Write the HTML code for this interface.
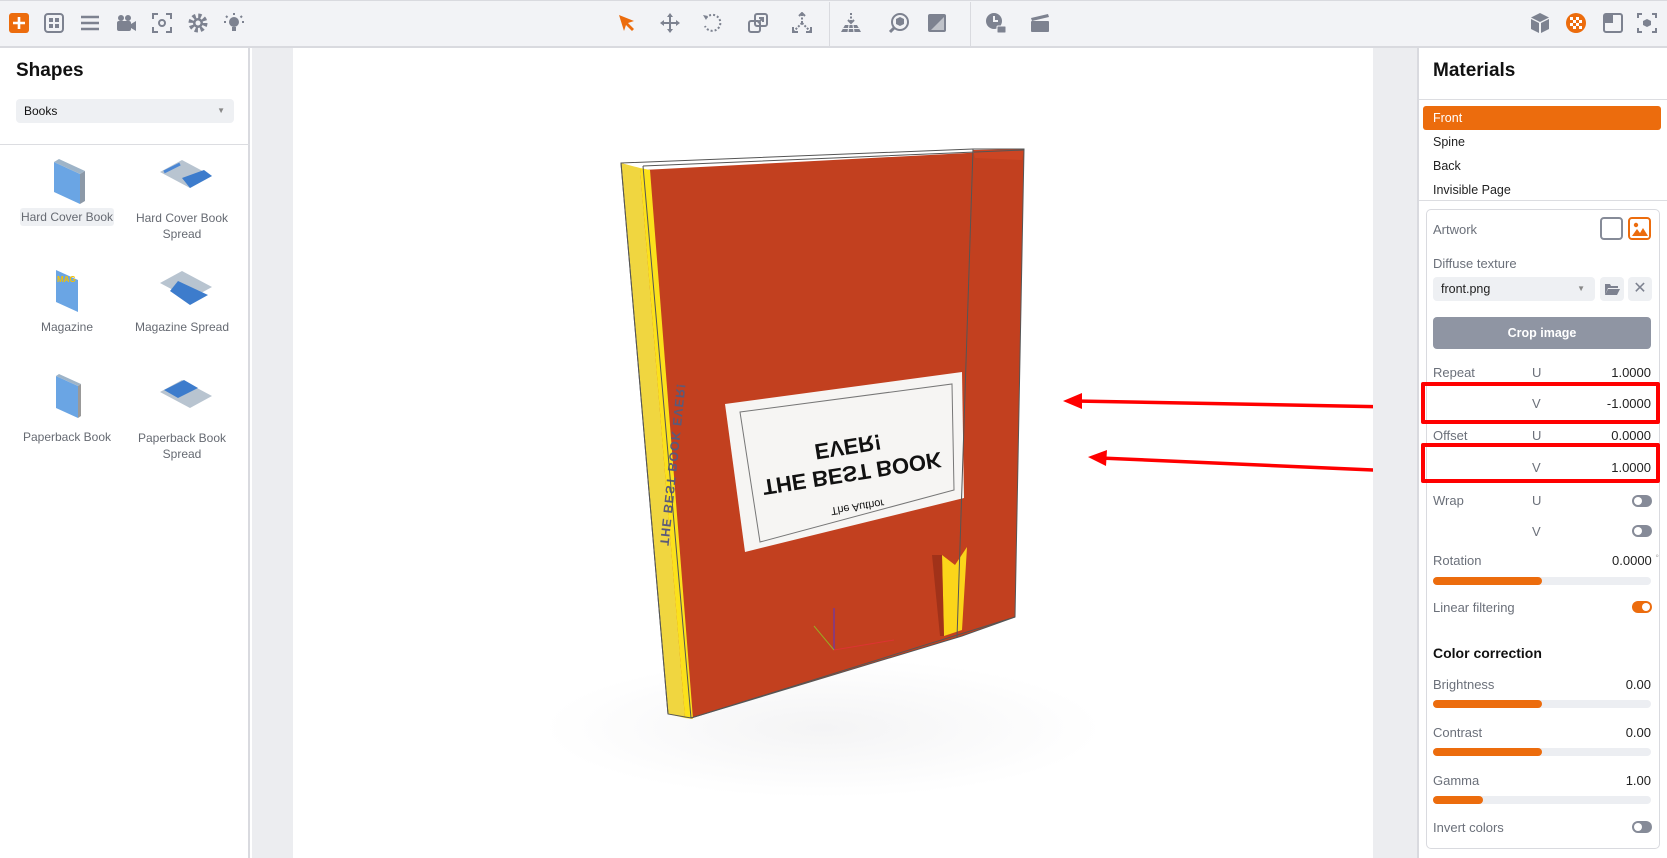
<!DOCTYPE html>
<html><head><meta charset="utf-8"><style>
*{box-sizing:border-box;margin:0;padding:0}
body{width:1667px;height:858px;overflow:hidden;font-family:"Liberation Sans",sans-serif;background:#fff;position:relative;color:#222}
.a{position:absolute}
.tb{left:0;top:0;width:1667px;height:48px;background:#f2f3f6;border-bottom:2px solid #d9dadf;border-top:1px solid #d9dadf}
.ic{position:absolute;top:12px;width:22px;height:22px}
.lbl{font-size:13px;color:#6b707a;position:absolute}
.val{font-size:13px;color:#222;position:absolute;text-align:right;right:16px}
.sl{position:absolute;left:1433px;width:218px;height:8px;border-radius:4px;background:#eceef2}
.sl i{display:block;height:8px;border-radius:4px;background:#ec6c0d}
.tg{position:absolute;left:1632px;width:20px;height:12px;border-radius:6px;background:#868b98}
.tg i{position:absolute;left:2px;top:2px;width:8px;height:8px;border-radius:50%;background:#fff}
.shl{font-size:12px;color:#666a72;position:absolute;text-align:center;width:120px}
</style></head><body>
<div class="a tb"></div>
<svg class="ic" style="left:8px" viewBox="0 0 22 22"><rect x="1" y="1" width="20" height="20" rx="3" fill="#ec6c0d"/><path d="M11 5v12M5 11h12" stroke="#fff" stroke-width="2.6"/></svg>
<svg class="ic" style="left:43px" viewBox="0 0 22 22"><rect x="2" y="2" width="18" height="18" rx="3" fill="none" stroke="#7d8290" stroke-width="2"/><rect x="6" y="6" width="4" height="4" fill="#7d8290"/><rect x="12" y="6" width="4" height="4" fill="#7d8290"/><rect x="6" y="12" width="4" height="4" fill="#7d8290"/><rect x="12" y="12" width="4" height="4" fill="#7d8290"/></svg>
<svg class="ic" style="left:79px" viewBox="0 0 22 22"><path d="M2 5h18M2 11h18M2 17h18" stroke="#7d8290" stroke-width="2.6"/></svg>
<svg class="ic" style="left:115px" viewBox="0 0 22 22"><circle cx="6" cy="6" r="3" fill="#7d8290"/><circle cx="13" cy="6" r="3" fill="#7d8290"/><rect x="2" y="9" width="14" height="10" rx="2" fill="#7d8290"/><path d="M16 12l5-3v10l-5-3z" fill="#7d8290"/></svg>
<svg class="ic" style="left:151px" viewBox="0 0 22 22"><path d="M2 7V2h5M15 2h5v5M20 15v5h-5M7 20H2v-5" stroke="#7d8290" stroke-width="2" fill="none"/><circle cx="11" cy="11" r="3" fill="none" stroke="#7d8290" stroke-width="2"/></svg>
<svg class="ic" style="left:187px" viewBox="0 0 22 22"><circle cx="11" cy="11" r="7" fill="none" stroke="#7d8290" stroke-width="5" stroke-dasharray="3 2.5"/><circle cx="11" cy="11" r="5" fill="#7d8290"/><circle cx="11" cy="11" r="2.5" fill="#f2f3f6"/></svg>
<svg class="ic" style="left:223px" viewBox="0 0 22 22"><circle cx="11" cy="10" r="5" fill="#7d8290"/><rect x="9" y="15" width="4" height="4" fill="#7d8290"/><path d="M11 1v2M3 4l1.5 1.5M19 4l-1.5 1.5M1 10h2M19 10h2" stroke="#7d8290" stroke-width="2"/></svg>
<svg class="ic" style="left:616px" viewBox="0 0 22 22"><path d="M3 3l15 6-6 2 6 6-2 2-6-6-2 6z" fill="#ec6c0d"/></svg>
<svg class="ic" style="left:659px" viewBox="0 0 22 22"><path d="M11 1l3 4h-2v5h5V8l4 3-4 3v-2h-5v5h2l-3 4-3-4h2v-5H5v2l-4-3 4-3v2h5V5H8z" fill="#7d8290"/></svg>
<svg class="ic" style="left:701px" viewBox="0 0 22 22"><path d="M5 6A8 8 0 1 1 4 14" fill="none" stroke="#7d8290" stroke-width="2" stroke-dasharray="2 2"/><path d="M2 3l5 1-2 4z" fill="#7d8290"/></svg>
<svg class="ic" style="left:747px" viewBox="0 0 22 22"><rect x="2" y="9" width="11" height="11" rx="2" fill="none" stroke="#7d8290" stroke-width="2"/><rect x="8" y="2" width="12" height="12" rx="2" fill="none" stroke="#7d8290" stroke-width="2"/><path d="M11 11l5-5M12 6h4v4" stroke="#7d8290" stroke-width="2" fill="none"/></svg>
<svg class="ic" style="left:791px" viewBox="0 0 22 22"><path d="M11 2v9M11 11l-8 8M11 11l8 8" stroke="#7d8290" stroke-width="2" stroke-dasharray="2 1.5"/><path d="M8 4l3-3 3 3M2 15v5h5M20 15v5h-5" stroke="#7d8290" stroke-width="2" fill="none"/></svg>
<div class="a" style="left:829px;top:2px;width:1px;height:45px;background:#d9dadf"></div>
<svg class="ic" style="left:840px" viewBox="0 0 22 22"><path d="M11 1v9" stroke="#7d8290" stroke-width="2" stroke-dasharray="2 1.5"/><path d="M8 8l3 3 3-3" stroke="#7d8290" stroke-width="2" fill="none"/><path d="M5 13h12l4 7H1z" fill="#7d8290"/><path d="M3 16.5h16M9 13l-1 7M13 13l1 7" stroke="#f2f3f6" stroke-width="1"/></svg>
<svg class="ic" style="left:888px" viewBox="0 0 22 22"><circle cx="12" cy="10" r="8" fill="none" stroke="#7d8290" stroke-width="2"/><path d="M6 16l-4 4" stroke="#7d8290" stroke-width="3"/><path d="M12 5l4 2v5l-4 2-4-2V7z" fill="#7d8290"/></svg>
<svg class="ic" style="left:926px" viewBox="0 0 22 22"><rect x="2" y="2" width="18" height="18" rx="2" fill="#7d8290"/><path d="M5 18L18 5v13z" fill="#bfc2c9"/></svg>
<div class="a" style="left:970px;top:2px;width:1px;height:45px;background:#d9dadf"></div>
<svg class="ic" style="left:985px" viewBox="0 0 22 22"><circle cx="9" cy="9" r="8" fill="#7d8290"/><path d="M9 4v5h4" stroke="#f2f3f6" stroke-width="2" fill="none"/><rect x="12" y="14" width="9" height="7" rx="1" fill="#7d8290" stroke="#f2f3f6"/></svg>
<svg class="ic" style="left:1029px" viewBox="0 0 22 22"><path d="M2 6l17-4 1 3-17 4z" fill="#7d8290"/><rect x="2" y="9" width="18" height="11" rx="1" fill="#7d8290"/></svg>
<svg class="ic" style="left:1529px" viewBox="0 0 22 22"><path d="M11 1l9 4.5-9 4.5-9-4.5z" fill="#7d8290"/><path d="M2 7l8 4v10l-8-4zM20 7l-8 4v10l8-4z" fill="#7d8290"/></svg>
<svg class="ic" style="left:1565px" viewBox="0 0 22 22"><circle cx="11" cy="11" r="10" fill="#ec6c0d"/><g fill="#fff"><rect x="5" y="5" width="3" height="3"/><rect x="11" y="5" width="3" height="3"/><rect x="8" y="8" width="3" height="3"/><rect x="14" y="8" width="3" height="3"/><rect x="5" y="11" width="3" height="3"/><rect x="11" y="11" width="3" height="3"/><rect x="8" y="14" width="3" height="3"/><rect x="14" y="14" width="3" height="3"/></g></svg>
<svg class="ic" style="left:1602px" viewBox="0 0 22 22"><rect x="2" y="2" width="18" height="18" rx="2" fill="none" stroke="#7d8290" stroke-width="2"/><path d="M3 3h8v8H3z" fill="#7d8290"/></svg>
<svg class="ic" style="left:1636px" viewBox="0 0 22 22"><path d="M2 6V2h4M16 2h4v4M20 16v4h-4M6 20H2v-4" stroke="#7d8290" stroke-width="2" fill="none"/><path d="M11 7l4 2v4l-4 2-4-2V9z" fill="#7d8290"/></svg>

<div class="a" style="left:0;top:48px;width:250px;height:810px;background:#fff;border-right:2px solid #d9dadf"></div>
<div class="a" style="left:16px;top:60px;font-size:19px;font-weight:bold;color:#111">Shapes</div>
<div class="a" style="left:16px;top:99px;width:218px;height:24px;background:#eef0f3;border-radius:4px;font-size:12px;line-height:24px;padding-left:8px;color:#111">Books<span style="position:absolute;right:9px;top:0;font-size:8px;color:#888">▼</span></div>
<div class="a" style="left:0;top:144px;width:250px;height:1px;background:#dcdde1"></div>
<svg class="a" style="left:0;top:150px" width="250" height="320" viewBox="0 150 250 320">
 <g><path d="M54 162l26 12v30l-26-12z" fill="#6aa5e4"/><path d="M54 162l5-3 26 12-5 3z" fill="#9eb4c8"/><path d="M80 174l5-3v30l-5 3z" fill="#8c99a8"/></g>
 <g><path d="M160 172l22-12 30 16-22 12z" fill="#b8c4d0"/><path d="M182 178l22-8 8 6-22 12z" fill="#3d7ccc"/><path d="M164 172l16-8" stroke="#4a86d4" stroke-width="3"/></g>
 <g><path d="M56 270l22 10v32l-22-10z" fill="#6aa5e4"/><text x="57" y="282" font-size="8" font-weight="bold" fill="#f6c200" font-family="Liberation Sans">MAG</text></g>
 <g><path d="M160 283l22-12 30 16-22 12z" fill="#b8c4d0"/><path d="M178 281l30 14-18 10-20-14z" fill="#3d7ccc"/></g>
 <g><path d="M56 376l22 10v32l-22-10z" fill="#6aa5e4"/><path d="M56 376l3-2 22 10-3 2z" fill="#9eb4c8"/><path d="M78 386l3-2v32l-3 2z" fill="#999"/></g>
 <g><path d="M160 392l22-12 30 16-22 12z" fill="#b8c4d0"/><path d="M164 390l20-10 14 8-20 10z" fill="#3d7ccc"/></g>
</svg>
<div class="a" style="left:20px;top:208px;width:94px;height:18px;background:#eef0f3;border-radius:3px"></div>
<div class="shl" style="left:7px;top:210px">Hard Cover Book</div>
<div class="shl" style="left:122px;top:210px;line-height:16px">Hard Cover Book<br>Spread</div>
<div class="shl" style="left:7px;top:320px">Magazine</div>
<div class="shl" style="left:122px;top:320px">Magazine Spread</div>
<div class="shl" style="left:7px;top:430px">Paperback Book</div>
<div class="shl" style="left:122px;top:430px;line-height:16px">Paperback Book<br>Spread</div>

<div class="a" style="left:252px;top:48px;width:41px;height:810px;background:#ecedf0"></div>
<div class="a" style="left:1373px;top:48px;width:44px;height:810px;background:#ecedf0"></div>
<div class="a" style="left:293px;top:48px;width:1080px;height:810px;background:radial-gradient(ellipse 280px 70px at 530px 680px,#f4f4f5,#fff 100%)"></div>
<svg class="a" style="left:293px;top:48px" width="1080" height="810" viewBox="293 48 1080 810">
 <polygon points="621,163 643,170 1024,150 1015,617 962,636 691,718 668,714" fill="#c2401f"/>
 <polygon points="621,163 640,168 685,718 668,714" fill="#f0d640"/>
 <polygon points="640,168 650,170 693,719 685,718" fill="#fbe11c"/>
 <polygon points="973,150 1024,149 1022,160 975,158" fill="#cc4523"/>
 <polygon points="725,404 962,372 964,498 745,552" fill="#f6f5f3"/>
 <polygon points="740,412 952,384 954,490 760,542" fill="none" stroke="#777" stroke-width="1"/>
 <g transform="translate(851,466) rotate(-9) scale(1,-1)" font-family="Liberation Sans" font-weight="bold" fill="#111" text-anchor="middle">
  <text x="0" y="0" font-size="22">THE BEST BOOK</text>
  <text x="0" y="27" font-size="22">EVER!</text>
  <text x="0" y="-38" font-size="11" font-weight="normal">The Author</text>
 </g>
 <text transform="translate(660,545) rotate(-84) scale(1,-1)" font-size="12.5" font-weight="bold" letter-spacing="1" fill="#5a5a7a" font-family="Liberation Sans">THE BEST BOOK EVER!</text>
 <polygon points="942,555 955,565 967,547 962,630 944,636" fill="#fbd51a"/>
 <polygon points="932,555 942,555 944,636 940,636" fill="#8a2a16" opacity=".6"/>
 <g fill="none" stroke="#555" stroke-width="1">
  <polygon points="621,163 973,149 1024,149 1015,617 962,636 691,718 668,714"/>
  <path d="M621,163 L668,714 M643,166 L691,718 M973,149 L957,638 M643,166 L1024,150 M691,718 L1015,617"/>
 </g>
 <path d="M834,650v-42" stroke="#5533cc"/><path d="M834,650l-20-24" stroke="#99aa22"/><path d="M834,650l60-10" stroke="#dd3333"/>
 <line x1="1396" y1="407" x2="1075" y2="401" stroke="#f00" stroke-width="3.5"/>
 <polygon points="1063,401 1082,393 1082,409" fill="#f00"/>
 <line x1="1396" y1="471" x2="1100" y2="458" stroke="#f00" stroke-width="3.5"/>
 <polygon points="1088,457 1107,450 1106,466" fill="#f00"/>
</svg>

<div class="a" style="left:1417px;top:48px;width:250px;height:810px;background:#fff;border-left:2px solid #d9dadf"></div>
<div class="a" style="left:1433px;top:60px;font-size:19px;font-weight:bold;color:#111">Materials</div>
<div class="a" style="left:1419px;top:99px;width:248px;height:1px;background:#dcdde1"></div>
<div class="a" style="left:1423px;top:106px;width:238px;height:24px;background:#ec6c0d;border-radius:3px;color:#fff;font-size:12.5px;line-height:24px;padding-left:10px">Front</div>
<div class="a" style="left:1433px;top:135px;font-size:12.5px">Spine</div>
<div class="a" style="left:1433px;top:159px;font-size:12.5px">Back</div>
<div class="a" style="left:1433px;top:183px;font-size:12.5px">Invisible Page</div>
<div class="a" style="left:1419px;top:200px;width:248px;height:1px;background:#dcdde1"></div>
<div class="a" style="left:1426px;top:209px;width:234px;height:640px;border:1px solid #d9dadf;border-radius:5px"></div>
<div class="lbl" style="left:1433px;top:222px">Artwork</div>
<div class="a" style="left:1600px;top:217px;width:23px;height:23px;border:2px solid #868b98;border-radius:4px"></div>
<svg class="a" style="left:1628px;top:217px" width="23" height="23" viewBox="0 0 23 23"><rect x="1" y="1" width="21" height="21" rx="3" fill="none" stroke="#ec6c0d" stroke-width="2"/><circle cx="8" cy="8" r="2.2" fill="#ec6c0d"/><path d="M4 19l5-7 3 4 3-5 5 8z" fill="#ec6c0d"/></svg>
<div class="lbl" style="left:1433px;top:256px">Diffuse texture</div>
<div class="a" style="left:1433px;top:277px;width:162px;height:24px;background:#eef0f3;border-radius:4px;font-size:12.5px;line-height:24px;padding-left:8px">front.png<span style="position:absolute;right:10px;font-size:8px;color:#888">▼</span></div>
<div class="a" style="left:1600px;top:277px;width:24px;height:24px;background:#eef0f3;border-radius:4px"></div>
<svg class="a" style="left:1604px;top:282px" width="16" height="14" viewBox="0 0 16 14"><path d="M1 2h5l1 2h7v2H4L1 13z" fill="#7d8290"/><path d="M4 7h12l-3 6H1z" fill="#7d8290"/></svg>
<div class="a" style="left:1628px;top:277px;width:24px;height:24px;background:#eef0f3;border-radius:4px;color:#7d8290;font-size:16px;text-align:center;line-height:24px">✕</div>
<div class="a" style="left:1433px;top:317px;width:218px;height:32px;background:#8f95a3;border-radius:4px;color:#fff;font-weight:bold;font-size:12.5px;text-align:center;line-height:32px">Crop image</div>
<div class="lbl" style="left:1433px;top:365px">Repeat</div><div class="lbl" style="left:1532px;top:365px">U</div><div class="val" style="top:365px">1.0000</div>
<div class="a" style="left:1421px;top:382px;width:239px;height:42px;border:4px solid #f00;border-radius:2px"></div>
<div class="lbl" style="left:1532px;top:396px">V</div><div class="val" style="top:396px">-1.0000</div>
<div class="lbl" style="left:1433px;top:428px">Offset</div><div class="lbl" style="left:1532px;top:428px">U</div><div class="val" style="top:428px">0.0000</div>
<div class="a" style="left:1421px;top:443px;width:239px;height:40px;border:4px solid #f00;border-radius:2px"></div>
<div class="lbl" style="left:1532px;top:460px">V</div><div class="val" style="top:460px">1.0000</div>
<div class="lbl" style="left:1433px;top:493px">Wrap</div><div class="lbl" style="left:1532px;top:493px">U</div>
<div class="tg" style="top:495px"><i></i></div>
<div class="lbl" style="left:1532px;top:524px">V</div>
<div class="tg" style="top:525px"><i></i></div>
<div class="lbl" style="left:1433px;top:553px">Rotation</div><div class="val" style="top:553px;right:8px">0.0000 <span style="color:#aaa;font-size:9px;vertical-align:top">°</span></div>
<div class="sl" style="top:577px"><i style="width:109px"></i></div>
<div class="lbl" style="left:1433px;top:600px">Linear filtering</div>
<div class="tg" style="top:601px;background:#ec6c0d"><i style="left:10px"></i></div>
<div class="a" style="left:1433px;top:645px;font-size:14px;font-weight:bold;color:#111">Color correction</div>
<div class="lbl" style="left:1433px;top:677px">Brightness</div><div class="val" style="top:677px">0.00</div>
<div class="sl" style="top:700px"><i style="width:109px"></i></div>
<div class="lbl" style="left:1433px;top:725px">Contrast</div><div class="val" style="top:725px">0.00</div>
<div class="sl" style="top:748px"><i style="width:109px"></i></div>
<div class="lbl" style="left:1433px;top:773px">Gamma</div><div class="val" style="top:773px">1.00</div>
<div class="sl" style="top:796px"><i style="width:50px"></i></div>
<div class="lbl" style="left:1433px;top:820px">Invert colors</div>
<div class="tg" style="top:821px"><i></i></div>
</body></html>
